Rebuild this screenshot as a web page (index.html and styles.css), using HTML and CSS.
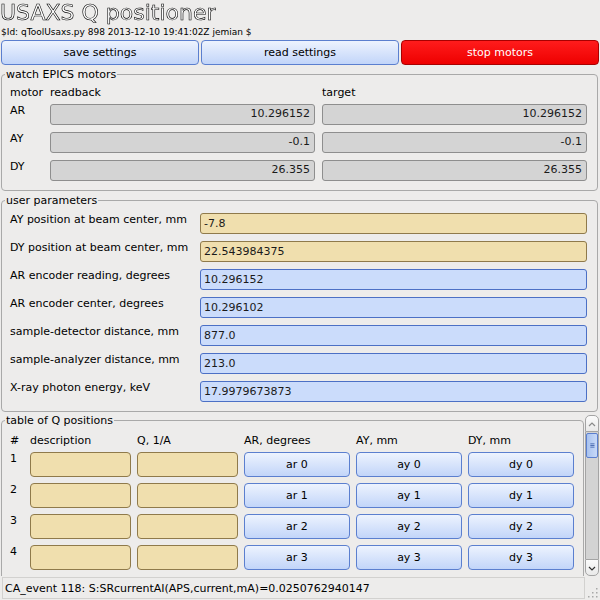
FILE: index.html
```html
<!DOCTYPE html>
<html>
<head>
<meta charset="utf-8">
<title>USAXS Q positioner</title>
<link rel="stylesheet" href="styles.css">
</head>
<body>
<div class="window">
  <h1 class="title">USAXS Q positioner</h1>
  <div class="svnid">$Id: qToolUsaxs.py 898 2013-12-10 19:41:02Z jemian $</div>
  <div class="actions">
    <button class="btn">save settings</button>
    <button class="btn">read settings</button>
    <button class="btn stop">stop motors</button>
  </div>

  <fieldset class="group motors">
    <legend>watch EPICS motors</legend>
    <div class="motor-grid">
      <span class="hdr">motor</span><span class="hdr">readback</span><span class="hdr">target</span>
      <span class="lbl">AR</span><input class="ro" readonly value="10.296152"><input class="ro" readonly value="10.296152">
      <span class="lbl">AY</span><input class="ro" readonly value="-0.1"><input class="ro" readonly value="-0.1">
      <span class="lbl">DY</span><input class="ro" readonly value="26.355"><input class="ro" readonly value="26.355">
    </div>
  </fieldset>

  <fieldset class="group params">
    <legend>user parameters</legend>
    <div class="param-grid">
      <span class="lbl">AY position at beam center, mm</span><input class="edit yellow" value="-7.8">
      <span class="lbl">DY position at beam center, mm</span><input class="edit yellow" value="22.543984375">
      <span class="lbl">AR encoder reading, degrees</span><input class="edit blue" value="10.296152">
      <span class="lbl">AR encoder center, degrees</span><input class="edit blue" value="10.296102">
      <span class="lbl">sample-detector distance, mm</span><input class="edit blue" value="877.0">
      <span class="lbl">sample-analyzer distance, mm</span><input class="edit blue" value="213.0">
      <span class="lbl">X-ray photon energy, keV</span><input class="edit blue" value="17.9979673873">
    </div>
  </fieldset>

  <div class="scrollarea">
    <div class="viewport">
      <fieldset class="group qtable">
        <legend>table of Q positions</legend>
        <div class="q-grid">
          <span class="hdr">#</span><span class="hdr">description</span><span class="hdr">Q, 1/A</span><span class="hdr">AR, degrees</span><span class="hdr">AY, mm</span><span class="hdr">DY, mm</span>
          <span class="lbl">1</span><input class="cell yellow"><input class="cell yellow"><button class="btn tb">ar 0</button><button class="btn tb">ay 0</button><button class="btn tb">dy 0</button>
          <span class="lbl">2</span><input class="cell yellow"><input class="cell yellow"><button class="btn tb">ar 1</button><button class="btn tb">ay 1</button><button class="btn tb">dy 1</button>
          <span class="lbl">3</span><input class="cell yellow"><input class="cell yellow"><button class="btn tb">ar 2</button><button class="btn tb">ay 2</button><button class="btn tb">dy 2</button>
          <span class="lbl">4</span><input class="cell yellow"><input class="cell yellow"><button class="btn tb">ar 3</button><button class="btn tb">ay 3</button><button class="btn tb">dy 3</button>
        </div>
      </fieldset>
    </div>
    <div class="vscroll">
      <div class="sb-btn up"><svg width="12" height="16" viewBox="0 0 12 16"><polyline points="3,10 6,7 9,10" fill="none" stroke="#8a8a8a" stroke-width="1.2"/></svg></div>
      <div class="sb-track">
        <div class="sb-handle"><svg width="12" height="23" viewBox="0 0 12 23"><path d="M4 9.5h5M4 11.5h5M4 13.5h5" stroke="#3d5fa8" stroke-width="1"/></svg></div>
      </div>
      <div class="sb-btn down"><svg width="12" height="16" viewBox="0 0 12 16"><polyline points="3,7 6,10 9,7" fill="none" stroke="#333" stroke-width="1.2"/></svg></div>
    </div>
  </div>

  <div class="statusbar">
    <span class="msg">CA_event 118: S:SRcurrentAI(APS,current,mA)=0.0250762940147</span>
    <svg class="grip" width="12" height="12" viewBox="0 0 12 12" fill="#a8a8a8">
      <rect x="9" y="1" width="1.5" height="1.5"/>
      <rect x="9" y="5" width="1.5" height="1.5"/><rect x="5" y="5" width="1.5" height="1.5"/>
      <rect x="9" y="9" width="1.5" height="1.5"/><rect x="5" y="9" width="1.5" height="1.5"/><rect x="1" y="9" width="1.5" height="1.5"/>
    </svg>
  </div>
</div>
</body>
</html>
```

FILE: styles.css
```css
* { box-sizing: border-box; }
html, body { margin: 0; padding: 0; }
body {
  width: 600px;
  height: 600px;
  overflow: hidden;
  background: #edeceb;
  font-family: "DejaVu Sans", sans-serif;
  font-size: 11px;
  line-height: 13px;
  color: #000;
}
.window {
  display: flex;
  flex-direction: column;
  height: 600px;
}
.title {
  margin: 0;
  height: 26px;
  font-size: 22px;
  line-height: 26px;
  font-weight: normal;
  color: #ffffff;
  -webkit-text-stroke: 0.6px #000;
  white-space: nowrap;
  will-change: transform;
}
.svnid {
  height: 12px;
  font-size: 9px;
  line-height: 12px;
  padding-left: 1px;
  white-space: nowrap;
}
.actions {
  display: flex;
  gap: 2px;
  padding: 0 1px;
  margin-top: 2px;
}
.btn {
  font: inherit;
  color: #000;
  padding: 0;
  margin: 0;
  border: 1px solid #5b7fcf;
  border-radius: 4px;
  background: linear-gradient(#edf3fe, #c2d5f9);
  white-space: nowrap;
}
.actions .btn {
  flex: 1;
  height: 25px;
}
.btn.stop {
  color: #fff;
  border-color: #a80000;
  background: linear-gradient(#ff1c1c, #ee0000);
}
.group {
  margin: 3px 2px 0 1px;
  min-width: 0;
  border: 1px solid #a9a9a9;
  border-radius: 4px;
  padding: 5px 10px 9px 8px;
}
.group legend {
  padding: 0 1px;
  margin-left: -5px;
  line-height: 13px;
}
.motor-grid {
  display: grid;
  grid-template-columns: 33px 1fr 1fr;
  column-gap: 7px;
  row-gap: 7px;
}
.hdr { white-space: nowrap; }
.motor-grid .hdr { margin-bottom: -2px; }
.lbl { white-space: nowrap; }
input {
  font: inherit;
  color: #1a1a1a;
  margin: 0;
  min-width: 0;
  width: 100%;
  outline: none;
}
.ro {
  height: 21px;
  border: 1px solid #8e8e8e;
  border-radius: 3px;
  background: #d4d4d4;
  text-align: right;
  padding: 0 4px 2px 4px;
  line-height: 13px;
}
.params { padding-top: 6px; }
.param-grid {
  display: grid;
  grid-template-columns: 183px 1fr;
  column-gap: 7px;
  row-gap: 7px;
}
.edit {
  height: 21px;
  border-radius: 3px;
  padding: 0 3px;
  line-height: 13px;
}
.yellow {
  background: #f0dfae;
  border: 1px solid #8f7a4b;
}
.blue {
  background: #cbdcfb;
  border: 1px solid #4c70c5;
}
.scrollarea {
  flex: 1;
  min-height: 0;
  display: flex;
  margin-top: 1px;
}
.viewport {
  flex: 1;
  min-width: 0;
  overflow: hidden;
}
.qtable {
  margin: 1px 0 0 1px;
  padding: 7px 9px 9px 8px;
}
.q-grid {
  display: grid;
  grid-template-columns: 14px 101px 101px 106px 106px 106px;
  column-gap: 6px;
  row-gap: 6px;
}
.q-grid .hdr { margin-bottom: -1px; }
.cell {
  height: 25px;
  border-radius: 4px;
}
.btn.tb {
  height: 25px;
}
.vscroll {
  width: 14px;
  margin: 2px 1px 0 1px;
  display: flex;
  flex-direction: column;
}
.sb-btn {
  height: 17px;
  flex: none;
  border: 1px solid #a4a4a4;
  background: linear-gradient(#fbfbfb, #e9e9e9);
  display: flex;
  align-items: center;
  justify-content: center;
}
.sb-btn.up { border-radius: 5px 5px 0 0; }
.sb-btn.down { border-radius: 0 0 5px 5px; }
.sb-track {
  flex: 1;
  background: #d3d3d3;
  border-left: 1px solid #a4a4a4;
  border-right: 1px solid #a4a4a4;
  padding-top: 1px;
}
.sb-handle {
  height: 25px;
  border: 1px solid #5b7fcf;
  border-radius: 2px;
  background: linear-gradient(90deg, #a9c3ef, #c8d9f8);
  display: flex;
  justify-content: center;
}
.statusbar {
  height: 24px;
  flex: none;
  display: flex;
  align-items: flex-end;
  padding: 0 1px 1px 2px;
}
.msg {
  flex: 1;
  height: 22px;
  border: 1px solid #d2d1cf;
  padding: 4px 0 0 2px;
  white-space: nowrap;
}
.grip {
  margin-left: 2px;
  flex: none;
}
```
